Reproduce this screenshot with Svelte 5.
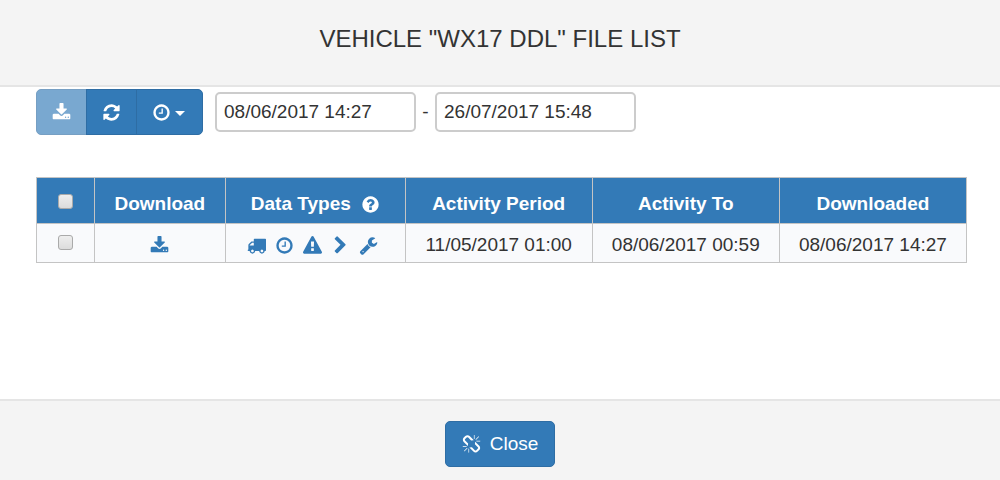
<script lang="ts">
  type Row = {
    id: number;
    from: string;
    to: string;
    downloaded: string;
  };

  const icons: Record<string, string> = {
    download:
      'M1344 1344q0-26-19-45t-45-19-45 19-19 45 19 45 45 19 45-19 19-45zm256 0q0-26-19-45t-45-19-45 19-19 45 19 45 45 19 45-19 19-45zm128-224v320q0 40-28 68t-68 28h-1472q-40 0-68-28t-28-68v-320q0-40 28-68t68-28h465l135 136q58 56 136 56t136-56l136-136h464q40 0 68 28t28 68zm-325-569q17 41-14 70l-448 448q-18 19-45 19t-45-19l-448-448q-31-29-14-70 17-39 59-39h256v-448q0-26 19-45t45-19h256q26 0 45 19t19 45v448h256q42 0 59 39z',
    refresh:
      'M1639 1056q0 5-1 7-64 268-268 434.5t-478 166.5q-146 0-282.5-55t-243.5-157l-129 129q-19 19-45 19t-45-19-19-45v-448q0-26 19-45t45-19h448q26 0 45 19t19 45-19 45l-137 137q71 66 161 102t187 36q134 0 250-65t186-179q11-17 53-117 8-23 30-23h192q13 0 22.5 9.5t9.5 22.5zm25-800v448q0 26-19 45t-45 19h-448q-26 0-45-19t-19-45 19-45l138-138q-148-137-349-137-134 0-250 65t-186 179q-11 17-53 117-8 23-30 23h-199q-13 0-22.5-9.5t-9.5-22.5v-7q65-268 270-434.5t480-166.5q146 0 284 55.5t245 156.5l130-129q19-19 45-19t45 19 19 45z',
    clock:
      'M1024 544v448q0 14-9 23t-23 9h-320q-14 0-23-9t-9-23v-64q0-14 9-23t23-9h224v-352q0-14 9-23t23-9h64q14 0 23 9t9 23zm416 352q0-148-73-273t-198-198-273-73-273 73-198 198-73 273 73 273 198 198 273 73 273-73 198-198 73-273zm224 0q0 209-103 385.5t-279.5 279.5-385.5 103-385.5-103-279.5-279.5-103-385.5 103-385.5 279.5-279.5 385.5-103 385.5 103 279.5 279.5 103 385.5z',
    truck:
      'M640 1408q0-52-38-90t-90-38-90 38-38 90 38 90 90 38 90-38 38-90zm-384-512h384v-256h-158q-13 0-22 9l-195 195q-9 9-9 22v30zm1280 512q0-52-38-90t-90-38-90 38-38 90 38 90 90 38 90-38 38-90zm256-1088v1024q0 15-4 26.5t-13.5 18.5-16.5 11.5-23.5 6-22.5 2-25.5 0-22.5-.5q0 106-75 181t-181 75-181-75-75-181h-384q0 106-75 181t-181 75-181-75-75-181h-64q-3 0-22.5.5t-25.5 0-22.5-2-23.5-6-16.5-11.5-13.5-18.5-4-26.5q0-26 19-45t45-19v-320q0-8-.5-35t0-38 2.5-34.5 6.5-37 14-30.5 22.5-30l198-198q19-19 50.5-32t58.5-13h160v-192q0-26 19-45t45-19h1024q26 0 45 19t19 45z',
    warning:
      'M1024 1375v-190q0-14-9.5-23.5t-22.5-9.5h-192q-13 0-22.5 9.5t-9.5 23.5v190q0 14 9.5 23.5t22.5 9.5h192q13 0 22.5-9.5t9.5-23.5zm-2-374l18-459q0-12-10-19-13-11-24-11h-220q-11 0-24 11-10 7-10 21l17 457q0 10 10 16.5t24 6.5h185q14 0 23.5-6.5t10.5-16.5zm-14-934l768 1408q35 63-2 126-17 29-46.5 46t-63.5 17h-1536q-34 0-63.5-17t-46.5-46q-37-63-2-126l768-1408q17-31 47-49t65-18 65 18 47 49z',
    chevron:
      'M1363 877l-742 742q-19 19-45 19t-45-19l-166-166q-19-19-19-45t19-45l531-531-531-531q-19-19-19-45t19-45l166-166q19-19 45-19t45 19l742 742q19 19 19 45t-19 45z',
    wrench:
      'M448 1472q0-26-19-45t-45-19-45 19-19 45 19 45 45 19 45-19 19-45zm644-420l-682 682q-37 37-90 37-52 0-91-37l-106-108q-38-36-38-90 0-53 38-91l681-681q39 98 114.5 173.5t173.5 114.5zm634-435q0 39-23 106-47 134-164.5 217.5t-258.5 83.5q-185 0-316.5-131.5t-131.5-316.5 131.5-316.5 316.5-131.5q58 0 121.5 16.5t107.5 46.5q16 11 16 28t-16 28l-293 169v224l193 107q5-3 79-48.5t135.5-81 70.5-35.5q15 0 23.5 10t8.5 25z',
    question:
      'M1024 1376v-192q0-14-9-23t-23-9h-192q-14 0-23 9t-9 23v192q0 14 9 23t23 9h192q14 0 23-9t9-23zm256-672q0-88-55.5-163t-138.5-116-170-41q-243 0-371 213-15 24 8 42l132 100q7 6 19 6 16 0 25-12 53-68 86-92 34-24 86-24 48 0 85.5 26t37.5 59q0 38-20 61t-68 45q-63 28-115.5 86.5t-52.5 125.5v36q0 14 9 23t23 9h192q14 0 23-9t9-23q0-19 21.5-49.5t54.5-49.5q32-18 49-28.5t46-35 44.5-48 28-60.5 12.5-81zm384 192q0 209-103 385.5t-279.5 279.5-385.5 103-385.5-103-279.5-279.5-103-385.5 103-385.5 279.5-279.5 385.5-103 385.5 103 279.5 279.5 103 385.5z',
    unlink:
      'M503 1271l-256 256q-10 9-23 9-12 0-23-9-9-10-9-23t9-23l256-256q10-9 23-9t23 9q9 10 9 23t-9 23zm169 41v320q0 14-9 23t-23 9-23-9-9-23v-320q0-14 9-23t23-9 23 9 9 23zm-224-224q0 14-9 23t-23 9h-320q-14 0-23-9t-9-23 9-23 23-9h320q14 0 23 9t9 23zm1264 128q0 120-85 203l-147 146q-83 83-203 83-121 0-204-85l-334-335q-21-21-42-56l239-18 273 274q28 27 68 27.5t68-26.5l147-146q28-28 28-67 0-40-28-68l-274-275 18-239q35 21 56 42l336 336q84 86 84 204zm-617-724l-239 18-273-274q-28-28-68-28-39 0-68 27l-147 146q-28 28-28 67 0 40 28 68l274 274-18 240q-35-21-56-42l-336-336q-84-86-84-204 0-120 85-203l147-146q83-83 203-83 121 0 204 85l334 335q21 21 42 56zm633 84q0 14-9 23t-23 9h-320q-14 0-23-9t-9-23 9-23 23-9h320q14 0 23 9t9 23zm-544-544v320q0 14-9 23t-23 9-23-9-9-23v-320q0-14 9-23t23-9 23 9 9 23zm407 151l-256 256q-11 9-23 9t-23-9q-9-10-9-23t9-23l256-256q10-9 23-9t23 9q9 10 9 23t-9 23z',
  };

  const dataTypes = ['truck', 'clock', 'warning', 'chevron', 'wrench'];

  const rows: Row[] = [
    { id: 1, from: '11/05/2017 01:00', to: '08/06/2017 00:59', downloaded: '08/06/2017 14:27' },
  ];

  let dateFrom = $state('08/06/2017 14:27');
  let dateTo = $state('26/07/2017 15:48');
  let selected = $state<number[]>([]);

  const toggleAll = (e: Event) => {
    selected = (e.target as HTMLInputElement).checked ? rows.map((r) => r.id) : [];
  };
</script>

{#snippet icon(name: string)}
  <svg class="icon" viewBox="0 0 1792 1792" aria-hidden="true"><path d={icons[name]} /></svg>
{/snippet}

<div class="modal">
  <header>
    <h1>VEHICLE "WX17 DDL" FILE LIST</h1>
  </header>

  <main>
    <div class="toolbar">
      <div class="btn-group">
        <button class="btn" aria-label="Download selected" disabled={selected.length === 0}>{@render icon('download')}</button>
        <button class="btn" aria-label="Refresh">{@render icon('refresh')}</button>
        <button class="btn dropdown" aria-label="Period">
          {@render icon('clock')}
          <span class="caret"></span>
        </button>
      </div>
      <input class="date" type="text" aria-label="From" bind:value={dateFrom} />
      <span class="dash">-</span>
      <input class="date" type="text" aria-label="To" bind:value={dateTo} />
    </div>

    <table>
      <colgroup>
        <col class="col-check" />
        <col class="col-download" />
        <col class="col-types" />
        <col class="col-date" />
        <col class="col-date" />
        <col class="col-date" />
      </colgroup>
      <thead>
        <tr>
          <th>
            <input type="checkbox" aria-label="Select all" checked={selected.length === rows.length} onchange={toggleAll} />
          </th>
          <th>Download</th>
          <th><span class="types-head">Data Types {@render icon('question')}</span></th>
          <th>Activity Period</th>
          <th>Activity To</th>
          <th>Downloaded</th>
        </tr>
      </thead>
      <tbody>
        {#each rows as row (row.id)}
          <tr>
            <td><input type="checkbox" aria-label="Select file" value={row.id} bind:group={selected} /></td>
            <td><a href="#download" aria-label="Download file">{@render icon('download')}</a></td>
            <td>
              <div class="types">
                {#each dataTypes as type}
                  {@render icon(type)}
                {/each}
              </div>
            </td>
            <td>{row.from}</td>
            <td>{row.to}</td>
            <td>{row.downloaded}</td>
          </tr>
        {/each}
      </tbody>
    </table>
  </main>

  <footer>
    <button class="btn close">{@render icon('unlink')} Close</button>
  </footer>
</div>

<style>
  .modal {
    display: flex;
    flex-direction: column;
    min-height: 100vh;
    color: #333;
    background: #fff;
    font-family: "Liberation Sans", Arial, sans-serif;
    font-size: 19px;
    line-height: 26px;
  }

  header,
  footer {
    background: #f4f4f4;
    text-align: center;
  }

  header {
    padding: 22px 36px 30px;
    border-bottom: 2px solid #e5e5e5;
  }

  footer {
    padding: 20px 36px 13px;
    border-top: 2px solid #e5e5e5;
  }

  h1 {
    margin: 0;
    font-size: 24px;
    font-weight: 400;
    line-height: 33px;
  }

  main {
    flex: 1;
    padding: 2px 33px 24px 36px;
  }

  .icon {
    display: block;
    width: 19px;
    height: 19px;
    flex: none;
    fill: currentColor;
  }

  .toolbar {
    display: flex;
    align-items: center;
    margin-bottom: 42px;
  }

  .btn-group {
    display: flex;
    margin-right: 12px;
  }

  .btn {
    display: inline-flex;
    align-items: center;
    justify-content: center;
    box-sizing: border-box;
    height: 46px;
    padding: 0 15px;
    border: 1px solid #2e6da4;
    border-radius: 5px;
    color: #fff;
    background: #337ab7;
    font: inherit;
    cursor: pointer;
  }

  .btn:disabled {
    opacity: 0.65;
    cursor: default;
  }

  .btn-group .btn + .btn {
    margin-left: -1px;
    border-top-left-radius: 0;
    border-bottom-left-radius: 0;
  }

  .btn-group .btn:not(:last-child) {
    border-top-right-radius: 0;
    border-bottom-right-radius: 0;
  }

  .btn-group .dropdown {
    gap: 4px;
    padding: 0 17px 0 15px;
  }

  .caret {
    border: 5px solid transparent;
    border-top-color: #fff;
    border-bottom: 0;
    margin-top: 3px;
  }

  .date {
    box-sizing: border-box;
    width: 201px;
    height: 40px;
    padding: 0 7px;
    border: 2px solid #ccc;
    border-radius: 5px;
    color: #333;
    background: #fff;
    font: inherit;
  }

  .dash {
    width: 19px;
    text-align: center;
  }

  table {
    width: 100%;
    table-layout: fixed;
    border-collapse: collapse;
    border: 1px solid #c4c4c4;
  }

  .col-check {
    width: 6.2%;
  }

  .col-download {
    width: 14.1%;
  }

  .col-types {
    width: 19.3%;
  }

  .col-date {
    width: 20.1%;
  }

  th,
  td {
    padding: 0;
    border: 1px solid #c4c4c4;
    text-align: center;
    vertical-align: middle;
  }

  th {
    height: 38px;
    padding-top: 7px;
    color: #fff;
    background: #337ab7;
    font-weight: 700;
  }

  td {
    height: 34px;
    padding-top: 4px;
    background: #f9fafc;
  }

  td a {
    display: block;
    width: fit-content;
    margin: 0 auto;
    color: #337ab7;
  }

  .types-head {
    display: inline-flex;
    align-items: center;
    gap: 10px;
  }

  .types {
    display: flex;
    align-items: center;
    justify-content: center;
    gap: 9px;
    padding-right: 5px;
    color: #337ab7;
  }

  input[type='checkbox'] {
    appearance: none;
    display: block;
    box-sizing: border-box;
    width: 15px;
    height: 15px;
    margin: 0 auto 6px;
    border: 1px solid #aaa;
    border-radius: 3px;
    background: linear-gradient(#eee, #dcdcdc);
  }

  input[type='checkbox']:checked {
    background: #2e6da4;
  }

  .close {
    gap: 9px;
    padding: 0 16px;
  }
</style>
